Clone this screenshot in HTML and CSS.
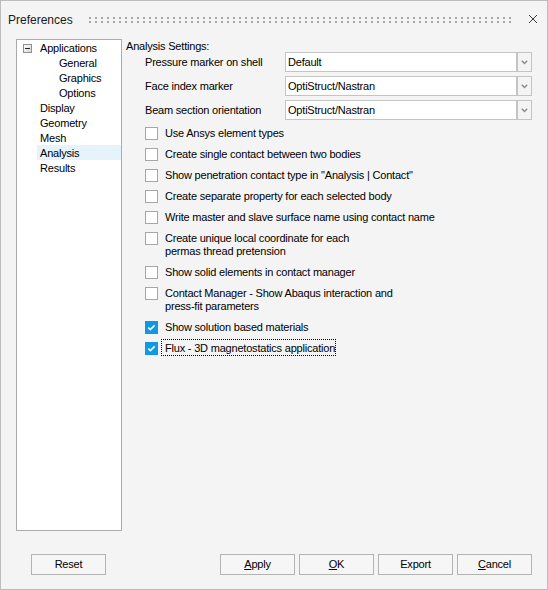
FILE: index.html
```html
<!DOCTYPE html>
<html>
<head>
<meta charset="utf-8">
<title>Preferences</title>
<link rel="stylesheet" href="styles.css">
</head>
<body>
<div class="window">
  <div class="titlebar">
    <span class="title">Preferences</span>
    <svg class="grip" height="6">
      <defs>
        <pattern id="dots" width="6" height="4" patternUnits="userSpaceOnUse">
          <rect width="2" height="2" fill="#a6a6a6"/>
        </pattern>
      </defs>
      <rect width="100%" height="6" fill="url(#dots)"/>
    </svg>
    <svg class="close" width="10" height="10" viewBox="0 0 10 10">
      <path d="M1 1L9 9M9 1L1 9" stroke="#3a3a3a" stroke-width="1" fill="none"/>
    </svg>
  </div>

  <div class="main">
    <div class="tree">
      <div class="node parent">
        <svg class="expander" width="9" height="9" viewBox="0 0 9 9">
          <defs>
            <linearGradient id="exp" x1="0" y1="0" x2="1" y2="1">
              <stop offset="0" stop-color="#ffffff"/>
              <stop offset="1" stop-color="#d4d4d4"/>
            </linearGradient>
          </defs>
          <rect x="0.5" y="0.5" width="8" height="8" fill="url(#exp)" stroke="#8e8f8f"/>
          <path d="M2 4.5H7" stroke="#222" stroke-width="1"/>
        </svg>
        <span>Applications</span>
      </div>
      <div class="node child">General</div>
      <div class="node child">Graphics</div>
      <div class="node child">Options</div>
      <div class="node top">Display</div>
      <div class="node top">Geometry</div>
      <div class="node top">Mesh</div>
      <div class="node top selected">Analysis</div>
      <div class="node top">Results</div>
    </div>

    <div class="settings">
      <div class="heading">Analysis Settings:</div>
      <div class="combos">
        <div class="combo-row">
          <span class="label">Pressure marker on shell</span>
          <div class="combo">
            <span class="field">Default</span>
            <span class="arrow"><svg width="7" height="5" viewBox="0 0 7 5"><path d="M0.8 0.8L3.5 3.5L6.2 0.8" stroke="#8c8c8c" stroke-width="1.5" fill="none"/></svg></span>
          </div>
        </div>
        <div class="combo-row">
          <span class="label">Face index marker</span>
          <div class="combo">
            <span class="field">OptiStruct/Nastran</span>
            <span class="arrow"><svg width="7" height="5" viewBox="0 0 7 5"><path d="M0.8 0.8L3.5 3.5L6.2 0.8" stroke="#8c8c8c" stroke-width="1.5" fill="none"/></svg></span>
          </div>
        </div>
        <div class="combo-row">
          <span class="label">Beam section orientation</span>
          <div class="combo">
            <span class="field">OptiStruct/Nastran</span>
            <span class="arrow"><svg width="7" height="5" viewBox="0 0 7 5"><path d="M0.8 0.8L3.5 3.5L6.2 0.8" stroke="#8c8c8c" stroke-width="1.5" fill="none"/></svg></span>
          </div>
        </div>
      </div>

      <div class="checks">
        <div class="check"><span class="box"></span><span class="text">Use Ansys element types</span></div>
        <div class="check"><span class="box"></span><span class="text">Create single contact between two bodies</span></div>
        <div class="check"><span class="box"></span><span class="text">Show penetration contact type in "Analysis | Contact"</span></div>
        <div class="check"><span class="box"></span><span class="text">Create separate property for each selected body</span></div>
        <div class="check"><span class="box"></span><span class="text">Write master and slave surface name using contact name</span></div>
        <div class="check"><span class="box"></span><span class="text">Create unique local coordinate for each<br>permas thread pretension</span></div>
        <div class="check"><span class="box"></span><span class="text">Show solid elements in contact manager</span></div>
        <div class="check"><span class="box"></span><span class="text">Contact Manager - Show Abaqus interaction and<br>press-fit parameters</span></div>
        <div class="check"><span class="box checked"><svg width="13" height="13" viewBox="0 0 13 13"><path d="M3.3 6.6L5.4 8.6L9.6 4.4" stroke="#fff" stroke-width="1.6" fill="none"/></svg></span><span class="text">Show solution based materials</span></div>
        <div class="check"><span class="box checked"><svg width="13" height="13" viewBox="0 0 13 13"><path d="M3.3 6.6L5.4 8.6L9.6 4.4" stroke="#fff" stroke-width="1.6" fill="none"/></svg></span><span class="text focus">Flux - 3D magnetostatics application</span></div>
      </div>
    </div>
  </div>

  <div class="footer">
    <button class="btn">Reset</button>
    <div class="actions">
      <button class="btn"><u>A</u>pply</button>
      <button class="btn"><u>O</u>K</button>
      <button class="btn">Export</button>
      <button class="btn"><u>C</u>ancel</button>
    </div>
  </div>
</div>
</body>
</html>
```

FILE: styles.css
```css
html, body {
  margin: 0;
  padding: 0;
  background: #f4f4f4;
}

.window {
  box-sizing: border-box;
  width: 548px;
  height: 590px;
  border: 1px solid #bcbcbc;
  background: #f4f4f4;
  font-family: "Liberation Sans", Arial, sans-serif;
  font-size: 11px;
  letter-spacing: -0.2px;
  color: #000;
}

.titlebar {
  box-sizing: border-box;
  height: 38px;
  display: flex;
  align-items: flex-start;
  padding: 12px 9px 0 7px;
}

.title {
  font-size: 12px;
  line-height: 14px;
  letter-spacing: 0;
  color: #1a1a1a;
}

.grip {
  flex: 1;
  margin: 4px 13px 0 16px;
}

.close {
  margin-top: 1px;
}

.main {
  display: flex;
  height: 492px;
  padding: 0 15px;
}

.tree {
  box-sizing: border-box;
  width: 106px;
  height: 492px;
  border: 1px solid #ababab;
  background: #fff;
}

.node {
  height: 15px;
  line-height: 17px;
  white-space: nowrap;
}

.node.parent {
  display: flex;
  align-items: flex-start;
  padding-left: 6px;
}

.expander {
  margin-top: 4px;
  margin-right: 8px;
  flex: none;
}

.node.child {
  padding-left: 42px;
}

.node.top {
  margin-left: 20px;
  padding-left: 3px;
}

.node.selected {
  background: #e5f3fb;
}

.settings {
  margin-left: 4px;
  flex: 1;
  display: flex;
  flex-direction: column;
}

.heading {
  height: 13px;
  line-height: 14px;
}

.combos {
  display: flex;
  flex-direction: column;
  gap: 4px;
}

.combo-row {
  display: flex;
  height: 20px;
}

.label {
  box-sizing: border-box;
  width: 159px;
  padding-left: 19px;
  line-height: 20px;
}

.combo {
  display: flex;
}

.field {
  box-sizing: border-box;
  width: 232px;
  height: 20px;
  border: 1px solid #c4c4c4;
  background: #fff;
  padding-left: 2px;
  line-height: 18px;
}

.arrow {
  box-sizing: border-box;
  width: 15px;
  height: 20px;
  border: 1px solid #c4c4c4;
  background: #f4f4f4;
  display: flex;
  align-items: center;
  justify-content: center;
}

.checks {
  margin-top: 3px;
  display: flex;
  flex-direction: column;
}

.check {
  display: flex;
  align-items: flex-start;
  padding: 4px 0 4px 19px;
  line-height: 13px;
}

.box {
  box-sizing: border-box;
  width: 13px;
  height: 13px;
  border: 1px solid #a6a6a6;
  background: #fff;
  flex: none;
}

.box.checked {
  border: none;
  background: #0f99e3;
}

.box svg {
  display: block;
}

.text {
  margin-left: 7px;
  white-space: nowrap;
}

.text.focus {
  margin-left: 4px;
  margin-top: -2px;
  padding: 2px 0 0 3px;
  outline: 1px dotted #000;
}

.footer {
  display: flex;
  margin-top: 23px;
  padding: 0 15px 0 30px;
}

.actions {
  margin-left: auto;
  display: flex;
  gap: 4px;
}

.btn {
  box-sizing: border-box;
  width: 75px;
  height: 21px;
  margin: 0;
  padding: 0;
  border: 1px solid #b3b3b3;
  border-radius: 0;
  background: #f6f6f6;
  font-family: "Liberation Sans", Arial, sans-serif;
  font-size: 11px;
  letter-spacing: -0.2px;
  color: #000;
  line-height: 19px;
}
```
